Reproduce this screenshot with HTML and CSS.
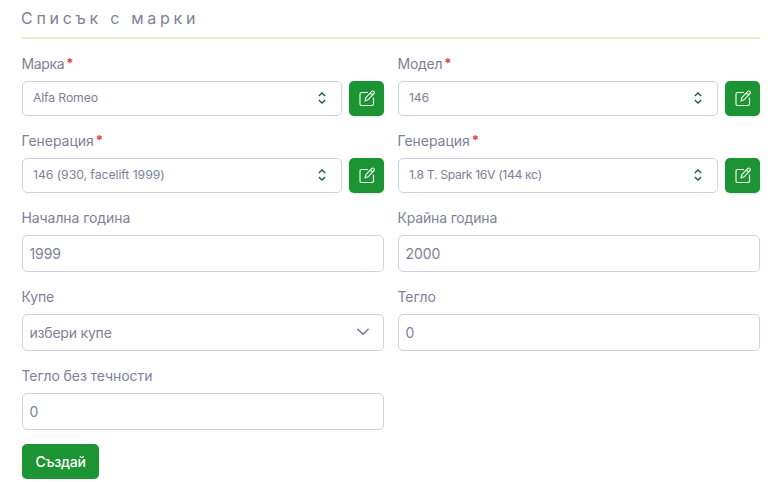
FILE: index.html
```html
<!DOCTYPE html>
<html lang="bg">
<head>
<meta charset="utf-8">
<title>Списък с марки</title>
<link rel="stylesheet" href="styles.css">
</head>
<body>
<svg width="0" height="0" class="sprite">
  <symbol id="edit" viewBox="0 0 18 18"><path d="M9.500 2.500H3.500A1.500 1.500 0 0 0 2 4v10a1.500 1.500 0 0 0 1.500 1.500h10.500a1.500 1.500 0 0 0 1.500-1.500V8M7 11l.9-3.400 5.900-6.200a1.300 1.300 0 0 1 1.900 0l.3.300a1.300 1.300 0 0 1 0 1.800L10.100 9.800zM12.500 3l2.200 2.200"/></symbol>
  <symbol id="updown" viewBox="0 0 10 14"><path d="M1.800 5 5 2 8.200 5M1.800 9 5 12 8.200 9"/></symbol>
</svg>
<main class="page">
  <h1 class="title"><span>Списък с марки</span></h1>
  <form class="grid">
    <div class="field">
      <div class="label"><span class="w-marka">Марка</span><b class="req">*</b></div>
      <div class="row"><div class="select"><span class="w-alfa">Alfa Romeo</span><svg class="updown"><use href="#updown"/></svg></div><button type="button" class="edit"><svg><use href="#edit"/></svg></button></div>
    </div>
    <div class="field">
      <div class="label"><span class="w-model">Модел</span><b class="req">*</b></div>
      <div class="row"><div class="select"><span class="w-alfa">146</span><svg class="updown"><use href="#updown"/></svg></div><button type="button" class="edit"><svg><use href="#edit"/></svg></button></div>
    </div>
    <div class="field">
      <div class="label"><span class="w-gen">Генерация</span><b class="req">*</b></div>
      <div class="row"><div class="select"><span class="w-facelift">146 (930, facelift 1999)</span><svg class="updown"><use href="#updown"/></svg></div><button type="button" class="edit"><svg><use href="#edit"/></svg></button></div>
    </div>
    <div class="field">
      <div class="label"><span class="w-gen">Генерация</span><b class="req">*</b></div>
      <div class="row"><div class="select"><span class="w-spark">1.8 T. Spark 16V (144 кс)</span><svg class="updown"><use href="#updown"/></svg></div><button type="button" class="edit"><svg><use href="#edit"/></svg></button></div>
    </div>
    <div class="field">
      <div class="label"><span>Начална година</span></div>
      <div class="input"><span>1999</span></div>
    </div>
    <div class="field">
      <div class="label"><span class="w-end">Крайна година</span></div>
      <div class="input"><span>2000</span></div>
    </div>
    <div class="field">
      <div class="label"><span class="w-end">Купе</span></div>
      <div class="input"><span class="w-choose">избери купе</span><svg class="chevron" viewBox="0 0 14 8"><path d="M1.800 1.300 7 6.300l5.200-5"/></svg></div>
    </div>
    <div class="field">
      <div class="label"><span>Тегло</span></div>
      <div class="input"><span>0</span></div>
    </div>
    <div class="field">
      <div class="label"><span>Тегло без течности</span></div>
      <div class="input"><span>0</span></div>
    </div>
  </form>
  <button type="button" class="submit"><span>Създай</span></button>
</main>
</body>
</html>
```
FILE: styles.css
```css
* { box-sizing: border-box; }
body { margin: 0; background: #fff; color: #7e819a; font: 14px/21px Inter, Roboto, sans-serif; letter-spacing: -0.080px; }
.sprite { position: absolute; }
.page { width: 738px; margin-left: 22px; }
.title { margin: 0 0 14px; height: 39px; padding-top: 6px; border-bottom: 2px solid #e6f0cd; font-size: 16px; line-height: 24px; font-weight: 400; letter-spacing: 3.720px; text-indent: -1px; }
.grid { display: grid; grid-template-columns: 362px 362px; gap: 14px; }
.label { display: flex; height: 21px; margin: 0 0 7px -0.500px; }
.req { margin-left: 2px; color: #e24242; font-size: 13px; font-weight: 700; }
.row { display: flex; gap: 7px; }
.select, .input { display: flex; align-items: center; justify-content: space-between; border: 1px solid #cbd5e1; border-radius: 5px; background: #fff; white-space: nowrap; }
.select { flex: 1; height: 35px; padding: 0 14px 2px 10px; font-size: 12.250px; }
.input { height: 37px; padding: 0 13px 0 6.500px; }
.w-marka { letter-spacing: -0.350px; }
.w-model { letter-spacing: -0.250px; }
.w-gen { letter-spacing: -0.050px; }
.w-alfa { letter-spacing: -0.150px; }
.w-facelift { letter-spacing: -0.060px; }
.w-spark { letter-spacing: -0.370px; }
.w-end { letter-spacing: -0.170px; }
.w-choose { letter-spacing: -0.200px; }
.updown { width: 10px; height: 14px; margin-top: 1px; fill: none; stroke: #1b5b38; stroke-width: 1.300; }
.chevron { width: 14px; height: 8px; margin-top: -2px; fill: none; stroke: #70758f; stroke-width: 1.500; stroke-linecap: round; stroke-linejoin: round; }
.edit, .submit { display: flex; align-items: center; justify-content: center; height: 35px; padding: 0; border: 0; border-radius: 5px; background: #1c9434; color: #fff; box-shadow: 0 1px 2px rgb(0 0 0 / 12%); }
.edit { width: 35px; }
.edit svg { width: 18px; height: 18px; fill: none; stroke: #e9f7e9; stroke-width: 1.200; stroke-linejoin: round; stroke-linecap: round; }
.submit { width: 77px; margin-top: 14px; font: 500 14px/21px Inter, Roboto, sans-serif; letter-spacing: -0.300px; }
```
